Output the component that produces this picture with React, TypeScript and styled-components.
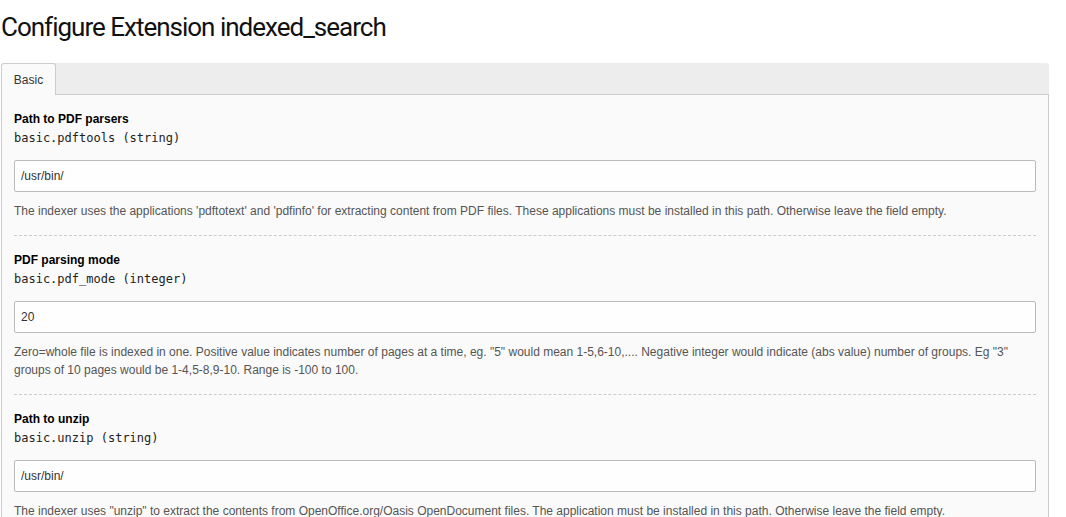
import styled, { createGlobalStyle } from "styled-components";

const GlobalStyle = createGlobalStyle`
  body {
    margin: 0;
    background: #fff;
    font-family: "Liberation Sans", Arial, sans-serif;
  }
`;

interface Field {
  label: string;
  name: string;
  type: string;
  value: string;
  help: string;
}

const fields: Field[] = [
  {
    label: "Path to PDF parsers",
    name: "basic.pdftools",
    type: "string",
    value: "/usr/bin/",
    help: "The indexer uses the applications 'pdftotext' and 'pdfinfo' for extracting content from PDF files. These applications must be installed in this path. Otherwise leave the field empty.",
  },
  {
    label: "PDF parsing mode",
    name: "basic.pdf_mode",
    type: "integer",
    value: "20",
    help: 'Zero=whole file is indexed in one. Positive value indicates number of pages at a time, eg. "5" would mean 1-5,6-10,.... Negative integer would indicate (abs value) number of groups. Eg "3" groups of 10 pages would be 1-4,5-8,9-10. Range is -100 to 100.',
  },
  {
    label: "Path to unzip",
    name: "basic.unzip",
    type: "string",
    value: "/usr/bin/",
    help: 'The indexer uses "unzip" to extract the contents from OpenOffice.org/Oasis OpenDocument files. The application must be installed in this path. Otherwise leave the field empty.',
  },
];

const App = () => {
  return (
    <Page>
      <GlobalStyle />
      <Title>Configure Extension indexed_search</Title>
      <Tabs>
        <TabBar>
          <Tab>Basic</Tab>
        </TabBar>
        <Panel>
          {fields.map((f) => (
            <Section key={f.name}>
              <Label>{f.label}</Label>
              <Code>
                {f.name} ({f.type})
              </Code>
              <Input defaultValue={f.value} />
              <Help>{f.help}</Help>
            </Section>
          ))}
        </Panel>
      </Tabs>
    </Page>
  );
};

export default App;

const Page = styled.div`
  padding: 0 17px 0 1px;
`;

const Title = styled.h1`
  margin: 0;
  padding: 12px 0 0 0;
  height: 63px;
  box-sizing: border-box;
  font-family: "Roboto", sans-serif;
  font-weight: normal;
  font-size: 26px;
  letter-spacing: -1px;
  line-height: 30px;
  color: #111;
`;

const Tabs = styled.div`
  width: 1048px;
`;

const TabBar = styled.div`
  display: flex;
  height: 32px;
  background: #ededed;
  border-radius: 3px 3px 0 0;
  border-bottom: 1px solid #ccc;
  box-sizing: border-box;
`;

const Tab = styled.div`
  width: 55px;
  height: 32px;
  box-sizing: border-box;
  display: flex;
  align-items: center;
  justify-content: center;
  background: #fafafa;
  border: 1px solid #ccc;
  border-bottom: none;
  border-radius: 3px 3px 0 0;
  font-size: 12px;
  color: #333;
`;

const Panel = styled.div`
  background: #fafafa;
  border: 1px solid #ccc;
  border-top: none;
  padding: 0 12px;
  min-height: 430px;
`;

const Section = styled.div`
  padding: 15px 0;
  border-bottom: 1px dashed #ccc;
`;

const Label = styled.div`
  font-weight: bold;
  font-size: 12px;
  line-height: 18px;
  color: #000;
`;

const Code = styled.div`
  font-family: "DejaVu Sans Mono", monospace;
  font-size: 12px;
  line-height: 20px;
  color: #222;
`;

const Input = styled.input`
  display: block;
  width: 100%;
  box-sizing: border-box;
  height: 32px;
  margin-top: 12px;
  padding: 0 6px;
  border: 1px solid #bbb;
  border-radius: 2px;
  background: #fefefe;
  font-family: "Liberation Sans", Arial, sans-serif;
  font-size: 12px;
  color: #333;
  outline: none;
`;

const Help = styled.div`
  margin-top: 10px;
  font-size: 12px;
  line-height: 18px;
  color: #555;
`;
